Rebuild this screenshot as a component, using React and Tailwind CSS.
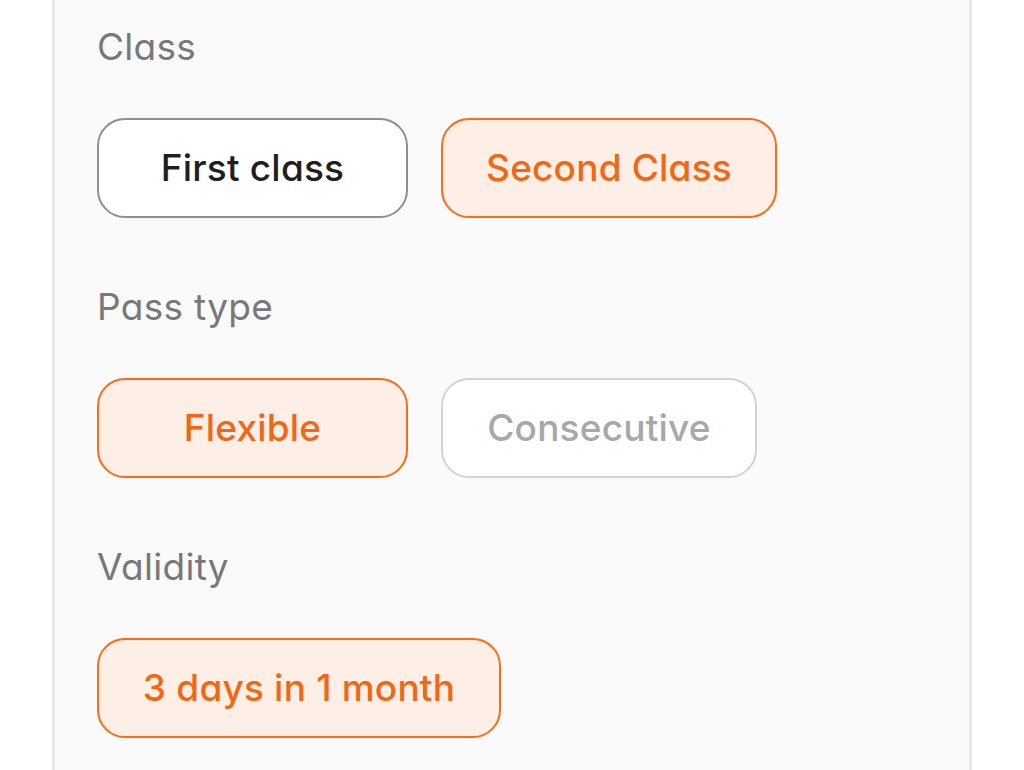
import React, { useState } from 'react';

const font = { fontFamily: 'Inter, "Noto Sans", sans-serif' };

function Chip({ label, active, muted, width, onClick }) {
  let look = 'border-[#8f8f8f] bg-white text-[#1f1f1f]';
  if (active) look = 'border-[#ff6a17] bg-[#fdefe5] text-[#f26614]';
  else if (muted) look = 'border-[#d3d3d3] bg-white text-[#a8a8a8]';
  return (
    <button
      onClick={onClick}
      className={`h-[100px] ${width} rounded-[28px] border-2 ${look} flex items-center justify-center text-[37px] font-medium tracking-[0.2px] [font-feature-settings:'cv11']`}
    >
      {label}
    </button>
  );
}

function Section({ title, children }) {
  return (
    <div className="flex flex-col">
      <div className="text-[37px] leading-[48px] tracking-[0.3px] text-[#787878] [font-feature-settings:'cv11']">{title}</div>
      <div className="mt-[47px] flex gap-[33px]">{children}</div>
    </div>
  );
}

export default function App() {
  const [travelClass, setTravelClass] = useState('second');
  const [passType, setPassType] = useState('flexible');

  return (
    <div className="min-h-screen bg-white px-[52px]" style={font}>
      <div className="min-h-screen border-x-[3px] border-[#e6e6e6] bg-[#fafafa] pl-[42px] pt-[23px] flex flex-col gap-[65px]">
        <Section title="Class">
          <Chip
            label="First class"
            width="w-[311px]"
            active={travelClass === 'first'}
            onClick={() => setTravelClass('first')}
          />
          <Chip
            label="Second Class"
            width="w-[336px]"
            active={travelClass === 'second'}
            onClick={() => setTravelClass('second')}
          />
        </Section>

        <Section title="Pass type">
          <Chip
            label="Flexible"
            width="w-[311px]"
            active={passType === 'flexible'}
            onClick={() => setPassType('flexible')}
          />
          <Chip
            label="Consecutive"
            width="w-[316px]"
            muted
            active={passType === 'consecutive'}
            onClick={() => setPassType('consecutive')}
          />
        </Section>

        <Section title="Validity">
          <Chip label="3 days in 1 month" width="w-[404px]" active />
        </Section>
      </div>
    </div>
  );
}
